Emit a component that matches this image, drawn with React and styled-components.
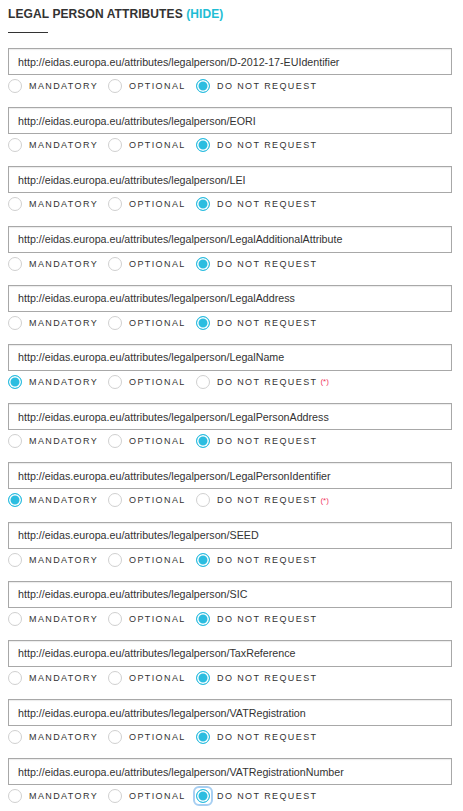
import React from "react";
import styled, { createGlobalStyle } from "styled-components";

const Global = createGlobalStyle`
  html, body { margin: 0; padding: 0; background: #fff; }
  body { font-family: "Liberation Sans", Arial, sans-serif; color: #333; }
`;

const Page = styled.div`
  padding: 7px 11px 0 8px;
`;

const Title = styled.h2`
  margin: 0;
  font-size: 12px;
  font-weight: bold;
  letter-spacing: 0.1px;
  color: #333;
  line-height: 15px;
  text-transform: uppercase;
`;

const Toggle = styled.span`
  color: #1fbdd4;
`;

const Rule = styled.div`
  width: 40px;
  height: 1px;
  border-top: 1.5px solid #333;
  margin: 10px 0 14px;
`;

const Group = styled.div`
  margin-bottom: 10.2px;
`;

const Field = styled.div`
  box-sizing: border-box;
  height: 27px;
  border: 1px solid #a8a8a8;
  box-shadow: inset 0 1px 1px rgba(0,0,0,0.08);
  display: flex;
  align-items: center;
  padding: 0 9px;
  font-size: 10.7px;
  color: #333;
  white-space: nowrap;
  overflow: hidden;
`;

const Options = styled.div`
  display: flex;
  align-items: center;
  height: 22px;
`;

const Option = styled.label`
  display: flex;
  align-items: center;
  width: ${(p) => p.$w}px;
  font-size: 9px;
  letter-spacing: 1.4px;
  color: #333;
  white-space: nowrap;
`;

const RadioWrap = styled.span`
  display: inline-flex;
  align-items: center;
  justify-content: center;
  width: 14px;
  height: 14px;
  margin-right: 7px;
  border-radius: 3px;
  outline: ${(p) => (p.$focus ? "2.5px solid #a7cff2" : "none")};
  outline-offset: 1px;
`;

const Radio = styled.span`
  box-sizing: border-box;
  width: 14px;
  height: 14px;
  border-radius: 50%;
  border: 1px solid ${(p) => (p.$on ? "#2bbde0" : "#d0d0d0")};
  background: ${(p) => (p.$on ? "#2bbde0" : "#fff")};
  box-shadow: ${(p) => (p.$on ? "inset 0 0 0 1.5px #fff" : "none")};
`;

const Req = styled.span`
  color: #f0365f;
  font-size: 8px;
  letter-spacing: 0;
  margin-left: 3px;
`;

const attrs = [
  ["D-2012-17-EUIdentifier", 2],
  ["EORI", 2],
  ["LEI", 2],
  ["LegalAdditionalAttribute", 2],
  ["LegalAddress", 2],
  ["LegalName", 0],
  ["LegalPersonAddress", 2],
  ["LegalPersonIdentifier", 0],
  ["SEED", 2],
  ["SIC", 2],
  ["TaxReference", 2],
  ["VATRegistration", 2],
  ["VATRegistrationNumber", 2, true],
];

const labels = [
  ["MANDATORY", 100],
  ["OPTIONAL", 88],
  ["DO NOT REQUEST", 200],
];

export default function App() {
  return (
    <>
      <Global />
      <Page>
        <Title>
          Legal person attributes <Toggle>(HIDE)</Toggle>
        </Title>
        <Rule />
        {attrs.map(([name, sel, focus]) => (
          <Group key={name}>
            <Field>http://eidas.europa.eu/attributes/legalperson/{name}</Field>
            <Options>
              {labels.map(([l, w], i) => (
                <Option key={l} $w={w}>
                  <RadioWrap $focus={focus && i === sel}>
                    <Radio $on={i === sel} />
                  </RadioWrap>
                  {l}
                  {i === 2 && sel === 0 && <Req>(*)</Req>}
                </Option>
              ))}
            </Options>
          </Group>
        ))}
      </Page>
    </>
  );
}
